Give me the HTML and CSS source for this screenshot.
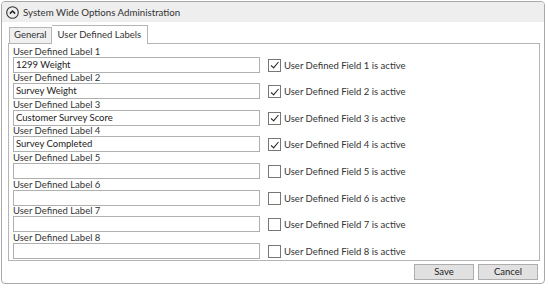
FILE: index.html
```html
<!DOCTYPE html>
<html lang="en">

<head>
  <meta charset="UTF-8" />
  <title>System Wide Options Administration</title>
  <link rel="stylesheet" href="styles.css">
</head>

<body>

  <div class="panel">
    <div class="panel-header">
      <span class="collapse-icon">
        <svg width="13" height="13" viewBox="0 0 13 13">
          <circle cx="6.5" cy="6.5" r="5.8" fill="none" stroke="#333" stroke-width="1.1" />
          <path d="M3.9 7.6 L6.5 5 L9.1 7.6" fill="none" stroke="#222" stroke-width="1.5" />
        </svg>
      </span>
      System Wide Options Administration
    </div>

    <div class="panel-body">
      <div class="tabs">
        <div class="tab">General</div>
        <div class="tab active">User Defined Labels</div>
      </div>

      <div class="tab-page">
        <div class="field-row">
          <div class="field">
            <label>User Defined Label 1</label>
            <div class="textbox">1299 Weight</div>
          </div>
          <div class="check"><span class="box checked"></span>User Defined Field 1 is active</div>
        </div>
        <div class="field-row">
          <div class="field">
            <label>User Defined Label 2</label>
            <div class="textbox">Survey Weight</div>
          </div>
          <div class="check"><span class="box checked"></span>User Defined Field 2 is active</div>
        </div>
        <div class="field-row">
          <div class="field">
            <label>User Defined Label 3</label>
            <div class="textbox">Customer Survey Score</div>
          </div>
          <div class="check"><span class="box checked"></span>User Defined Field 3 is active</div>
        </div>
        <div class="field-row">
          <div class="field">
            <label>User Defined Label 4</label>
            <div class="textbox">Survey Completed</div>
          </div>
          <div class="check"><span class="box checked"></span>User Defined Field 4 is active</div>
        </div>
        <div class="field-row">
          <div class="field">
            <label>User Defined Label 5</label>
            <div class="textbox"></div>
          </div>
          <div class="check"><span class="box"></span>User Defined Field 5 is active</div>
        </div>
        <div class="field-row">
          <div class="field">
            <label>User Defined Label 6</label>
            <div class="textbox"></div>
          </div>
          <div class="check"><span class="box"></span>User Defined Field 6 is active</div>
        </div>
        <div class="field-row">
          <div class="field">
            <label>User Defined Label 7</label>
            <div class="textbox"></div>
          </div>
          <div class="check"><span class="box"></span>User Defined Field 7 is active</div>
        </div>
        <div class="field-row">
          <div class="field">
            <label>User Defined Label 8</label>
            <div class="textbox"></div>
          </div>
          <div class="check"><span class="box"></span>User Defined Field 8 is active</div>
        </div>
      </div>

      <div class="buttons">
        <button class="btn">Save</button>
        <button class="btn">Cancel</button>
      </div>
    </div>
  </div>

</body>

</html>
```

FILE: styles.css
```css
body {
  font-family: 'Lato', 'Open Sans', sans-serif;
  font-size: 9.5px;
  color: #333;
  background: #fff;
  margin: 0;
  padding: 1px;
}

.panel {
  width: 544px;
  height: 283px;
  border: 1px solid #a8a8a8;
  border-radius: 4px;
  box-sizing: border-box;
  overflow: hidden;
  display: flex;
  flex-direction: column;
}

.panel-header {
  height: 20px;
  background: #eeeeee;
  display: flex;
  align-items: center;
  padding-left: 4px;
  gap: 4px;
  font-size: 9.7px;
  color: #333;
}

.collapse-icon {
  display: flex;
}

.panel-body {
  padding: 2px 4px 0 6px;
  display: flex;
  flex-direction: column;
}

.tabs {
  display: flex;
  align-items: flex-end;
  height: 19px;
  padding-left: 1px;
}

.tab {
  height: 15px;
  padding: 0 4px;
  border: 1px solid #b5b5b5;
  border-bottom: none;
  background: #f0f0f0;
  line-height: 14px;
}

.tab.active {
  height: 18px;
  line-height: 18px;
  background: #fff;
  border-left: none;
  position: relative;
  top: 1px;
  padding: 0 6px 0 6px;
}

.tab-page {
  border: 1px solid #b5b5b5;
  height: 218px;
  box-sizing: border-box;
  padding: 2px 4px 0 4px;
  display: flex;
  flex-direction: column;
}

.field-row {
  display: flex;
  align-items: flex-end;
  height: 26.6px;
}

.field {
  width: 247px;
  display: flex;
  flex-direction: column;
}

.field label {
  line-height: 13px;
  margin-bottom: -1px;
}

.textbox {
  height: 14px;
  border: 1px solid #b0b0b0;
  padding-left: 2px;
  line-height: 14px;
  color: #222;
}

.check {
  display: flex;
  align-items: center;
  margin-left: 8px;
  height: 15px;
  gap: 3px;
  color: #333;
}

.box {
  width: 11px;
  height: 11px;
  border: 1px solid #777;
  background: #fff;
  position: relative;
}

.box.checked::after {
  content: "";
  position: absolute;
  left: 3.5px;
  top: 0.5px;
  width: 2.5px;
  height: 6.5px;
  border: solid #222;
  border-width: 0 1.6px 1.6px 0;
  transform: rotate(40deg);
}

.buttons {
  display: flex;
  justify-content: flex-end;
  gap: 4px;
  margin-top: 3px;
  padding-right: 2px;
}

.btn {
  width: 60px;
  height: 16px;
  font-family: inherit;
  font-size: 9.5px;
  color: #222;
  background: #e1e1e1;
  border: 1px solid #adadad;
  padding: 0;
  line-height: 14px;
}
```
